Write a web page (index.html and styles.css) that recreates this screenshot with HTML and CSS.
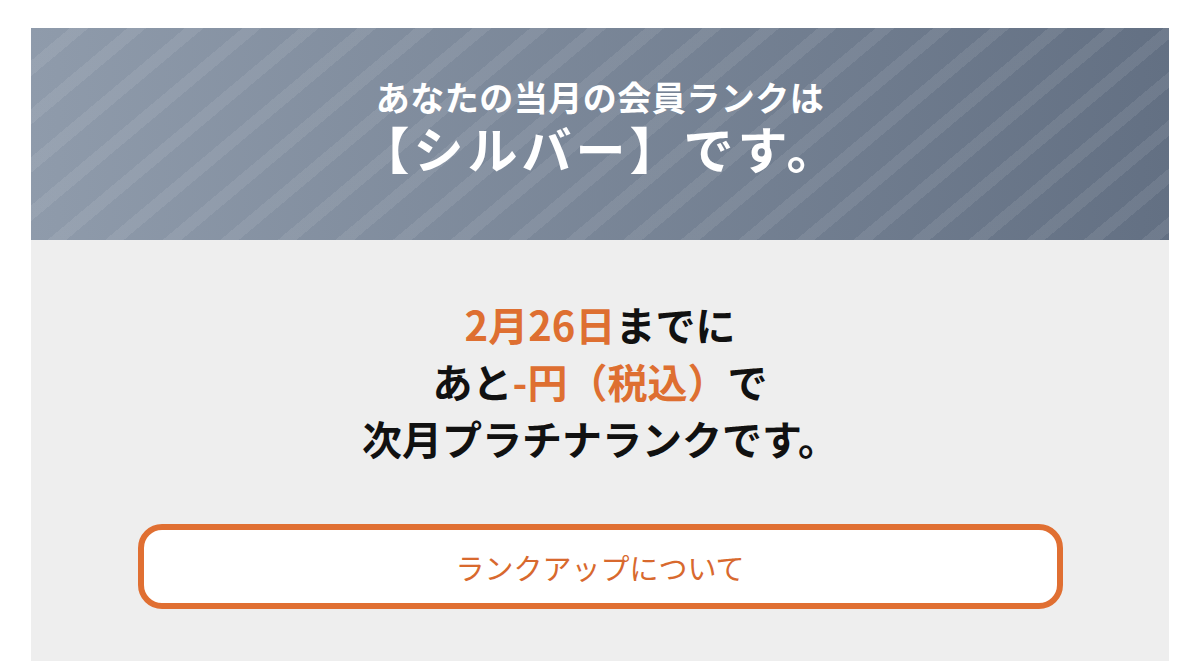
FILE: index.html
```html
<!DOCTYPE html>
<html lang="ja">
<head>
    <meta charset="UTF-8">
    <meta name="viewport" content="width=device-width, initial-scale=1.0">
    <title>会員ランク</title>
    <link rel="stylesheet" href="styles.css">
</head>
<body>
    <div class="rank-card">
        <div class="rank-header">
            <p class="rank-lead">あなたの当月の会員ランクは</p>
            <p class="rank-name">【シルバー】です。</p>
        </div>

        <div class="rank-body">
            <p class="rank-next">
                <span class="accent">2月26日</span>までに<br>
                あと<span class="accent">-円（税込）</span>で<br>
                次月プラチナランクです。
            </p>
            <a class="rank-button" href="#">ランクアップについて</a>
        </div>
    </div>
</body>
</html>
```

FILE: styles.css
```css
body {
    margin: 0;
    padding: 0;
    background: #fff;
    font-family: "Noto Sans CJK JP", "Noto Sans", sans-serif;
}

.rank-card {
    margin: 28px 31px 0;
    background: #eeeeee;
    height: 633px;
}

.rank-header {
    height: 212px;
    display: flex;
    flex-direction: column;
    align-items: center;
    justify-content: center;
    padding-bottom: 18px;
    box-sizing: border-box;
    color: #fff;
    background:
        repeating-linear-gradient(140deg,
            rgba(255, 255, 255, 0) 0 25px,
            rgba(255, 255, 255, 0.08) 25px 37px),
        linear-gradient(90deg, #8f9bab, #637083);
}

.rank-header p {
    margin: 0;
    font-weight: 700;
    text-align: center;
}

.rank-lead {
    font-size: 34px;
    line-height: 44px;
    letter-spacing: 0.5px;
}

.rank-name {
    font-size: 50px;
    line-height: 56px;
    letter-spacing: 4px;
}

.rank-body {
    padding: 56px 0 0;
    display: flex;
    flex-direction: column;
    align-items: center;
}

.rank-next {
    margin: 0;
    font-size: 40px;
    line-height: 57px;
    font-weight: 700;
    color: #111;
    text-align: center;
}

.accent {
    color: #de6f31;
}

.rank-button {
    margin-top: 57px;
    width: 913px;
    height: 73px;
    border: 6px solid #e06f32;
    border-radius: 24px;
    background: #fff;
    color: #d8692e;
    font-size: 29px;
    display: flex;
    align-items: center;
    justify-content: center;
    text-decoration: none;
}
```
